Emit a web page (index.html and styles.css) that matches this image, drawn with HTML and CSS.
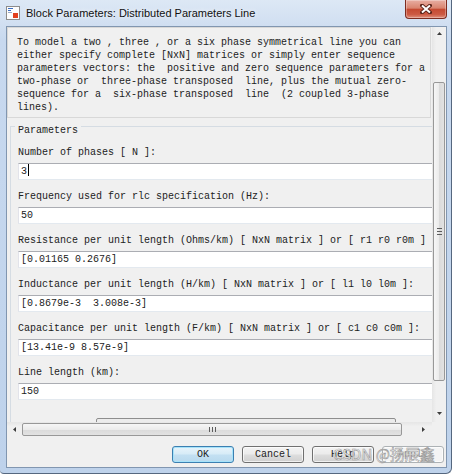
FILE: index.html
```html
<!DOCTYPE html>
<html lang="en">
<head>
    <meta charset="UTF-8">
    <meta name="viewport" content="width=device-width, initial-scale=1.0">
    <title>Block Parameters: Distributed Parameters Line</title>
    <link rel="stylesheet" href="styles.css">
</head>
<body>
    <div class="window">
        <div class="titlebar">
            <svg class="app-icon" width="14" height="14" viewBox="0 0 14 14">
                <rect x="0.5" y="0.5" width="13" height="13" fill="#fdfdfd" stroke="#8c8c8c"/>
                <rect x="2" y="2" width="5" height="1" fill="#3b6fc6"/>
                <rect x="2" y="4" width="3" height="1" fill="#3b6fc6"/>
                <rect x="2" y="6" width="4" height="1" fill="#9aa9c4"/>
                <rect x="7" y="7" width="5" height="5" fill="#e2401f"/>
            </svg>
            <span class="title">Block Parameters: Distributed Parameters Line</span>
            <div class="close">
                <svg width="12" height="10" viewBox="0 0 12 10">
                    <path d="M2 1.5 L10 8.5 M10 1.5 L2 8.5" stroke="#5a2218" stroke-width="3.8" stroke-linecap="square"/>
                    <path d="M2 1.5 L10 8.5 M10 1.5 L2 8.5" stroke="#fff" stroke-width="2"/>
                </svg>
            </div>
        </div>

        <div class="client">
            <div class="scroller">
                <div class="view-col">
                    <div class="viewport">
                        <div class="desc">To model a two , three , or a six phase symmetrical line you can
either specify complete [NxN] matrices or simply enter sequence
parameters vectors: the  positive and zero sequence parameters for a
two-phase or  three-phase transposed  line, plus the mutual zero-
sequence for a  six-phase transposed  line  (2 coupled 3-phase
lines).</div>

                        <div class="group">
                            <div class="group-title">Parameters</div>
                            <div class="param">
                                <div class="label">Number of phases [ N ]:</div>
                                <div class="field">3<span class="caret"></span></div>
                            </div>
                            <div class="param">
                                <div class="label">Frequency used for rlc specification (Hz):</div>
                                <div class="field">50</div>
                            </div>
                            <div class="param">
                                <div class="label">Resistance per unit length (Ohms/km) [ NxN matrix ] or [ r1 r0 r0m ]</div>
                                <div class="field">[0.01165 0.2676]</div>
                            </div>
                            <div class="param">
                                <div class="label">Inductance per unit length (H/km) [ NxN matrix ] or [ l1 l0 l0m ]:</div>
                                <div class="field">[0.8679e-3  3.008e-3]</div>
                            </div>
                            <div class="param">
                                <div class="label">Capacitance per unit length (F/km) [ NxN matrix ] or [ c1 c0 c0m ]:</div>
                                <div class="field">[13.41e-9 8.57e-9]</div>
                            </div>
                            <div class="param">
                                <div class="label">Line length (km):</div>
                                <div class="field">150</div>
                            </div>
                            <div class="more"></div>
                        </div>
                    </div>

                    <div class="hbar">
                        <div class="sb-arrow h">
                            <svg width="3" height="5" viewBox="0 0 3 5"><polygon points="3,0 3,5 0,2.5" fill="#3d3d3d"/></svg>
                        </div>
                        <div class="hthumb">
                            <svg width="7" height="5" viewBox="0 0 7 5">
                                <rect x="0" y="0" width="1" height="5" fill="#5c5c5c"/>
                                <rect x="3" y="0" width="1" height="5" fill="#5c5c5c"/>
                                <rect x="6" y="0" width="1" height="5" fill="#5c5c5c"/>
                            </svg>
                        </div>
                        <div class="sb-fill"></div>
                        <div class="sb-arrow h end">
                            <svg width="3" height="5" viewBox="0 0 3 5"><polygon points="0,0 0,5 3,2.5" fill="#3d3d3d"/></svg>
                        </div>
                    </div>
                </div>

                <div class="vcol">
                    <div class="vbar">
                        <div class="sb-arrow v top">
                            <svg width="5" height="3" viewBox="0 0 5 3"><polygon points="0,3 5,3 2.5,0" fill="#3d3d3d"/></svg>
                        </div>
                        <div class="vthumb">
                            <svg width="5" height="7" viewBox="0 0 5 7">
                                <rect x="0" y="0" width="5" height="1" fill="#5c5c5c"/>
                                <rect x="0" y="3" width="5" height="1" fill="#5c5c5c"/>
                                <rect x="0" y="6" width="5" height="1" fill="#5c5c5c"/>
                            </svg>
                        </div>
                        <div class="sb-fill"></div>
                        <div class="sb-arrow v">
                            <svg width="5" height="3" viewBox="0 0 5 3"><polygon points="0,0 5,0 2.5,3" fill="#3d3d3d"/></svg>
                        </div>
                    </div>
                    <div class="corner"></div>
                </div>
            </div>

            <div class="buttons">
                <div class="btn default">OK</div>
                <div class="btn">Cancel</div>
                <div class="btn">Help</div>
                <div class="btn disabled">Apply</div>
            </div>
        </div>

        <div class="watermark">CSDN @扬辰鑫</div>
    </div>
</body>
</html>
```

FILE: styles.css
```css
* {
    box-sizing: border-box;
}
body {
    margin: 0;
    background: #fff;
    font-family: "Liberation Mono", monospace;
    font-size: 10px;
    color: #222;
}
.window {
    position: relative;
    width: 452px;
    height: 474px;
    padding: 0 4px 5px 6px;
    display: flex;
    flex-direction: column;
    background: linear-gradient(#dde8f5, #c8d9ef 40px, #bed2eb);
    border-right: 1px solid #55677f;
    border-bottom: 1px solid #55677f;
    border-radius: 0 0 6px 4px;
}
.titlebar {
    height: 26px;
    flex: none;
    display: flex;
    align-items: center;
}
.app-icon {
    flex: none;
}
.title {
    flex: 1;
    margin-left: 6px;
    font-family: "Liberation Sans", sans-serif;
    font-size: 11px;
    color: #111;
    text-shadow: 0 0 5px #fff;
}
.close {
    align-self: flex-start;
    width: 42px;
    height: 19px;
    display: flex;
    align-items: center;
    justify-content: center;
    border: 1px solid #7d2c20;
    border-top: none;
    border-radius: 0 0 4px 4px;
    background: linear-gradient(#e8aea2, #d9846f 45%, #c54a32 52%, #cc5a43 80%, #e0907c);
    box-shadow: inset 0 0 0 1px rgba(255,255,255,0.3);
}
.client {
    flex: 1;
    display: flex;
    flex-direction: column;
    border: 1px solid #8196b0;
    background: #f0f0f0;
}
.scroller {
    height: 410px;
    flex: none;
    display: flex;
}
.view-col {
    flex: 1;
    min-width: 0;
    display: flex;
    flex-direction: column;
}
.viewport {
    flex: 1;
    overflow: hidden;
}

/* description panel */
.desc {
    width: 424px;
    border: 1px solid #d8d8d8;
    padding: 8px 0 3px 9px;
    line-height: 13px;
    white-space: pre;
}

/* parameters group */
.group {
    width: 470px;
    margin: 8px 0 0 3px;
    padding: 0 0 20px 7px;
    border: 1px solid #d5dce3;
}
.group-title {
    width: max-content;
    margin: -3px 0 6px -3px;
    padding: 0 3px;
    line-height: 13px;
    background: #f0f0f0;
}
.param {
    margin-bottom: 7px;
}
.label {
    line-height: 20px;
    white-space: pre;
}
.field {
    width: 440px;
    height: 17px;
    padding-left: 2px;
    line-height: 15px;
    white-space: pre;
    background: #fff;
    border: 1px solid;
    border-color: #abadb3 #dbdfe6 #e3e9ef #e2e3ea;
}
.caret {
    display: inline-block;
    width: 1px;
    height: 12px;
    margin-left: 1px;
    vertical-align: -2px;
    background: #000;
}
.more {
    width: 300px;
    height: 24px;
    margin: 18px 0 0 78px;
    border: 1px solid #8e8e8e;
    border-radius: 2px;
    background: #ececec;
}

/* scrollbars */
.hbar {
    height: 15px;
    flex: none;
    display: flex;
    align-items: center;
    background: linear-gradient(#e6e6e6, #f0f0f0 30%, #f0f0f0);
}
.vcol {
    width: 14px;
    flex: none;
    display: flex;
    flex-direction: column;
}
.vbar {
    flex: 1;
    display: flex;
    flex-direction: column;
    align-items: center;
    background: linear-gradient(to right, #e6e6e6, #f0f0f0 30%, #f0f0f0);
}
.corner {
    height: 15px;
    background: #f0f0f0;
}
.sb-arrow {
    flex: none;
    display: flex;
    align-items: center;
    justify-content: center;
}
.sb-arrow.h {
    width: 15px;
    height: 15px;
}
.sb-arrow.h.end {
    width: 17px;
}
.sb-arrow.v {
    width: 14px;
    height: 17px;
}
.sb-arrow.v.top {
    align-items: flex-start;
    padding-top: 5px;
}
.sb-fill {
    flex: 1;
}
.hthumb {
    width: 380px;
    height: 13px;
    display: flex;
    align-items: center;
    justify-content: center;
    border: 1px solid #989898;
    border-radius: 2px;
    background: linear-gradient(#f6f6f6, #ebebeb 50%, #dadada 52%, #e2e2e2);
}
.vthumb {
    width: 12px;
    height: 299px;
    margin-top: 38px;
    display: flex;
    align-items: center;
    justify-content: center;
    border: 1px solid #989898;
    border-radius: 2px;
    background: linear-gradient(to right, #f6f6f6, #ebebeb 50%, #dadada 52%, #e2e2e2);
}

/* dialog buttons */
.buttons {
    flex: 1;
    display: flex;
    justify-content: flex-end;
    align-items: flex-start;
    gap: 8px;
    padding: 9px 2px 0 0;
}
.btn {
    width: 62px;
    height: 17px;
    display: flex;
    align-items: center;
    justify-content: center;
    border: 1px solid #707070;
    border-radius: 3px;
    background: linear-gradient(#f3f3f3, #ebebeb 48%, #dddddd 52%, #d0d0d0);
    box-shadow: inset 0 0 0 1px rgba(255,255,255,0.7);
}
.btn.default {
    border-color: #3c7fb1;
    background: linear-gradient(#e8f4fb, #d6ebf7 48%, #c3e0f2 52%, #b8d9ee);
    box-shadow: inset 0 0 0 1px #a6e3fa;
}
.btn.disabled {
    color: #8a8a8a;
    border-color: #adb2b5;
    background: #f4f4f4;
}
.watermark {
    position: absolute;
    left: 333px;
    top: 445px;
    font-family: "Noto Sans CJK SC", sans-serif;
    font-size: 15px;
    line-height: 18px;
    color: rgba(255,255,255,0.85);
    -webkit-text-stroke: 0.6px #9a9a9a;
}
```
